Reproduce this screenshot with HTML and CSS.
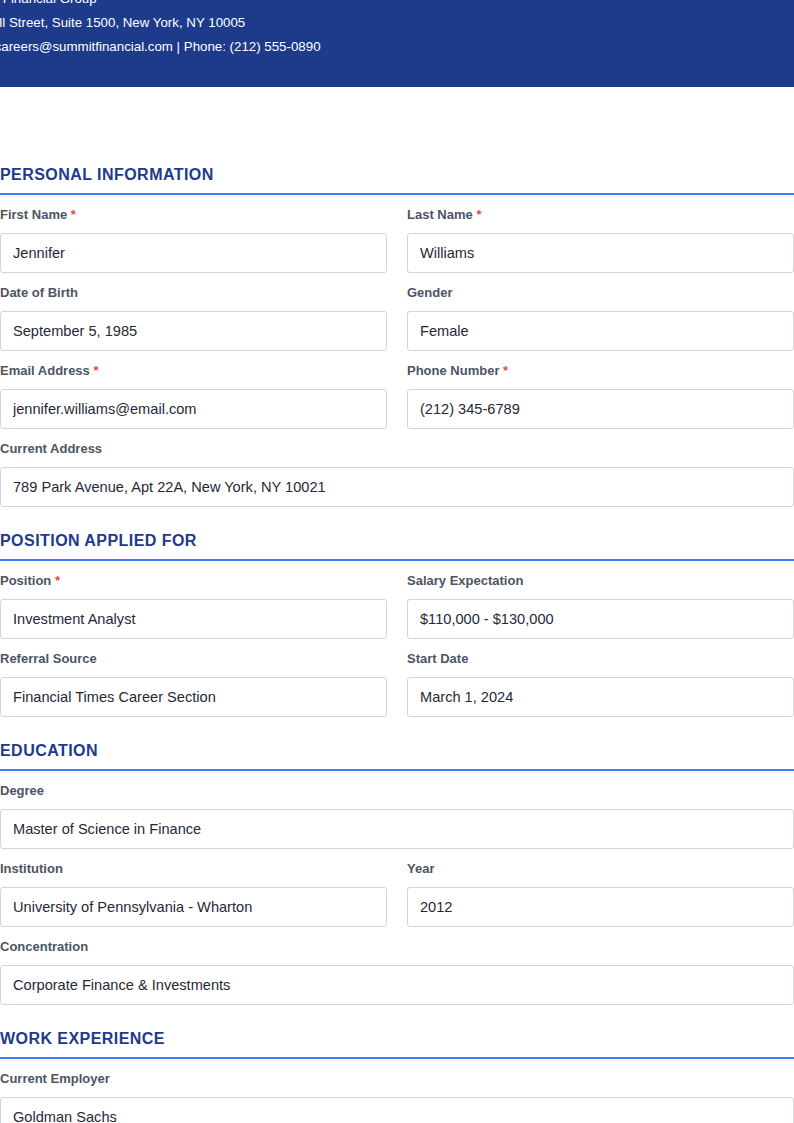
FILE: index.html
```html
<!DOCTYPE html>
<html lang="en">
<head>
    <meta charset="UTF-8">
    <meta name="viewport" content="width=device-width, initial-scale=1.0">
    <title>Employment Application - Summit Financial Group</title>
    <link rel="stylesheet" href="styles.css">
</head>
<body>
    <header class="company-header">
        <div class="company-info">
            <p>Summit Financial Group</p>
            <p>100 Wall Street, Suite 1500, New York, NY 10005</p>
            <p>Email: careers@summitfinancial.com | Phone: (212) 555-0890</p>
        </div>
    </header>

    <form class="application">
        <section class="section first">
            <h2 class="section-title">Personal Information</h2>
            <div class="row">
                <div class="field">
                    <label>First Name <span class="req">*</span></label>
                    <input type="text" value="Jennifer" readonly>
                </div>
                <div class="field">
                    <label>Last Name <span class="req">*</span></label>
                    <input type="text" value="Williams" readonly>
                </div>
            </div>
            <div class="row">
                <div class="field">
                    <label>Date of Birth</label>
                    <input type="text" value="September 5, 1985" readonly>
                </div>
                <div class="field">
                    <label>Gender</label>
                    <input type="text" value="Female" readonly>
                </div>
            </div>
            <div class="row">
                <div class="field">
                    <label>Email Address <span class="req">*</span></label>
                    <input type="text" value="jennifer.williams@email.com" readonly>
                </div>
                <div class="field">
                    <label>Phone Number <span class="req">*</span></label>
                    <input type="text" value="(212) 345-6789" readonly>
                </div>
            </div>
            <div class="field">
                <label>Current Address</label>
                <input type="text" value="789 Park Avenue, Apt 22A, New York, NY 10021" readonly>
            </div>
        </section>

        <section class="section">
            <h2 class="section-title">Position Applied For</h2>
            <div class="row">
                <div class="field">
                    <label>Position <span class="req">*</span></label>
                    <input type="text" value="Investment Analyst" readonly>
                </div>
                <div class="field">
                    <label>Salary Expectation</label>
                    <input type="text" value="$110,000 - $130,000" readonly>
                </div>
            </div>
            <div class="row">
                <div class="field">
                    <label>Referral Source</label>
                    <input type="text" value="Financial Times Career Section" readonly>
                </div>
                <div class="field">
                    <label>Start Date</label>
                    <input type="text" value="March 1, 2024" readonly>
                </div>
            </div>
        </section>

        <section class="section">
            <h2 class="section-title">Education</h2>
            <div class="field">
                <label>Degree</label>
                <input type="text" value="Master of Science in Finance" readonly>
            </div>
            <div class="row">
                <div class="field">
                    <label>Institution</label>
                    <input type="text" value="University of Pennsylvania - Wharton" readonly>
                </div>
                <div class="field">
                    <label>Year</label>
                    <input type="text" value="2012" readonly>
                </div>
            </div>
            <div class="field">
                <label>Concentration</label>
                <input type="text" value="Corporate Finance &amp; Investments" readonly>
            </div>
        </section>

        <section class="section">
            <h2 class="section-title">Work Experience</h2>
            <div class="field">
                <label>Current Employer</label>
                <input type="text" value="Goldman Sachs" readonly>
            </div>
        </section>
    </form>
</body>
</html>
```

FILE: styles.css
```css
body {
    margin: 0;
    background-color: #ffffff;
    color: #1f2937;
    font-family: "Liberation Sans", Arial, sans-serif;
}

.company-header {
    display: flow-root;
    background-color: #1e3a8a;
    color: #ffffff;
    padding-bottom: 28px;
}

.company-info {
    margin: -13px 0 0 -46px;
}

.company-info p {
    margin: 0;
    font-size: 13.3px;
    line-height: 24px;
    white-space: nowrap;
}

.section {
    margin-top: 24px;
}

.section.first {
    margin-top: 78px;
}

.section-title {
    margin: 0 0 12px;
    padding-bottom: 8px;
    border-bottom: 2px solid #3b82f6;
    color: #1e3a8a;
    font-size: 16px;
    line-height: 20px;
    font-weight: bold;
    text-transform: uppercase;
    letter-spacing: 0.45px;
}

.row {
    display: grid;
    grid-template-columns: 1fr 1fr;
    column-gap: 20px;
    margin-bottom: 12px;
}

.field {
    margin-bottom: 12px;
}

.row .field {
    margin-bottom: 0;
}

.field label {
    display: block;
    margin-bottom: 10px;
    color: #4b5563;
    font-size: 13px;
    line-height: 16px;
    font-weight: bold;
}

.req {
    color: #ef4444;
}

.field input {
    display: block;
    box-sizing: border-box;
    width: 100%;
    height: 40px;
    margin: 0;
    padding: 0 12px;
    border: 1px solid #d1d5db;
    border-radius: 3px;
    background-color: #ffffff;
    color: #1f2937;
    font-family: "Liberation Sans", Arial, sans-serif;
    font-size: 14.6px;
    outline: none;
}
```
